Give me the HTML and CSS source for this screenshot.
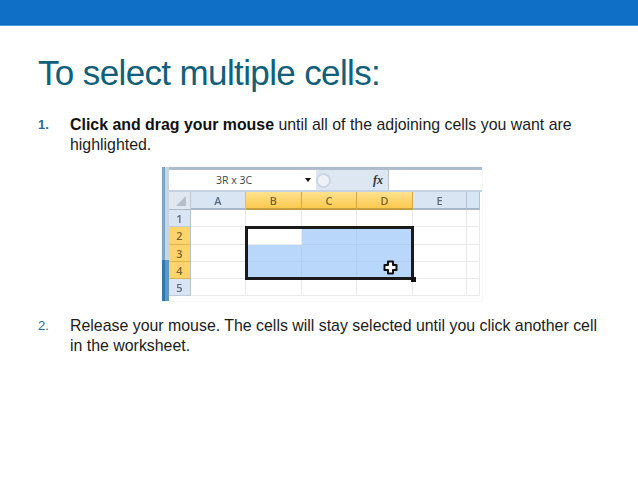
FILE: index.html
```html
<!DOCTYPE html>
<html lang="en">
<head>
<meta charset="utf-8">
<title>To select multiple cells</title>
<link rel="stylesheet" href="styles.css">
</head>
<body>
<header class="topbar"></header>
<main class="slide">
  <h1 class="title">To select multiple cells:</h1>
  <div class="item">
    <span class="num">1.</span>
    <p class="text"><b>Click and drag your mouse</b> until all of the adjoining cells you want are highlighted.</p>
  </div>
  <div class="shot-wrap">
    <div class="shot">
      <div class="strip"><div class="strip-dark"></div></div>
      <div class="sheet">
        <div class="formula">
          <div class="namebox"><span class="nametext">3R x 3C</span><span class="arrow"></span></div>
          <div class="fxbox"><span class="pill"></span><span class="fx">fx</span></div>
          <div class="input"></div>
        </div>
        <div class="grid">
          <div class="corner"><svg width="10" height="10" viewBox="0 0 10 10"><path d="M10 0V10H0Z" fill="#b4bfca"/></svg></div>
          <div class="ch">A</div><div class="ch on">B</div><div class="ch on">C</div><div class="ch on">D</div><div class="ch">E</div><div class="ch"></div>

          <div class="rh">1</div><div class="c"></div><div class="c"></div><div class="c"></div><div class="c"></div><div class="c"></div><div class="c"></div>
          <div class="rh on">2</div><div class="c"></div><div class="c"></div><div class="c s"></div><div class="c s"></div><div class="c"></div><div class="c"></div>
          <div class="rh on">3</div><div class="c"></div><div class="c s"></div><div class="c s"></div><div class="c s"></div><div class="c"></div><div class="c"></div>
          <div class="rh on">4</div><div class="c"></div><div class="c s"></div><div class="c s"></div><div class="c s"></div><div class="c"></div><div class="c"></div>
          <div class="rh">5</div><div class="c"></div><div class="c"></div><div class="c"></div><div class="c"></div><div class="c"></div><div class="c"></div>
          <div class="rest"></div>

          <div class="range"><span class="handle"></span>
            <svg class="cursor" width="15" height="15" viewBox="0 0 15 15"><path d="M5 1.5H10V5H13.5V10H10V13.5H5V10H1.5V5H5Z" fill="#fff" stroke="#111" stroke-width="2" stroke-linejoin="round"/></svg>
          </div>
        </div>
      </div>
    </div>
  </div>
  <div class="item item-second">
    <span class="num">2.</span>
    <p class="text">Release your mouse. The cells will stay selected until you click another cell in the worksheet.</p>
  </div>
</main>
</body>
</html>
```
FILE: styles.css
```css
* { box-sizing: border-box; }
html, body { margin: 0; padding: 0; }
body {
  width: 638px;
  height: 479px;
  overflow: hidden;
  background: #fff;
  font-family: "Liberation Sans", Arial, sans-serif;
  color: #1b1b1b;
}
.topbar {
  height: 26px;
  background: #0f6fc6;
  border-bottom: 1px solid #4d97db;
}
.slide { padding: 26px 0 0 38px; }
.title {
  margin: 0;
  font-size: 35px;
  line-height: 42px;
  font-weight: 400;
  letter-spacing: -0.63px;
  color: #10607a;
}
.item {
  display: flex;
  margin-top: 21px;
  font-size: 15.9px;
  line-height: 20px;
}
.num {
  width: 32px;
  flex: none;
  color: #2a6a96;
  font-size: 13px;
  font-weight: 700;
}
.item-second .num { font-weight: 400; }
.text { margin: 0; width: 535px; }
.text b { color: #111; }
.shot-wrap { margin: 12px 0 0 124px; height: 134px; }
.shot {
  width: 320px;
  height: 134px;
  display: flex;
  filter: blur(0.6px);
  box-shadow: 0 0 2px #e8e8e8;
}
.strip {
  width: 7px;
  display: flex;
  align-items: flex-end;
  background: linear-gradient(90deg, #7fa5c5 45%, #c8d6e3 45%);
}
.strip-dark { width: 100%; height: 41px; background: linear-gradient(90deg, #2f77ad 45%, #5f97c2 45%); }
.sheet { flex: 1; display: flex; flex-direction: column; min-width: 0; }
.formula {
  height: 25px;
  display: flex;
  background: #e3ebf4;
  border-top: 3px solid #aebccb;
  border-bottom: 2px solid #c6d2df;
}
.namebox {
  width: 147px;
  background: #fff;
  display: flex;
  align-items: center;
  padding-left: 47px;
  font-family: "Open Sans", sans-serif;
  font-size: 10.5px;
  color: #444;
}
.nametext { width: 89px; }
.arrow { width: 0; height: 0; border: 3px solid transparent; border-top: 4px solid #111; border-bottom: 0; }
.fxbox {
  width: 72px;
  display: flex;
  align-items: center;
  justify-content: space-between;
  padding-right: 5px;
  background: #dde7f2;
}
.pill {
  width: 15px; height: 15px;
  border: 2px solid #ccd6e1; border-radius: 50%; background: #eef2f7;
}
.fx { font-family: "Liberation Serif", serif; font-style: italic; font-weight: 700; font-size: 12px; color: #333; }
.input { flex: 1; background: #fff; border-left: 1px solid #b6c4d2; }
.grid {
  position: relative;
  display: grid;
  grid-template-columns: 22px 55px 56px 55px 56px 54px 13px;
  grid-template-rows: 18px 17px 18px 17px 17px 17px 1fr;
  flex: 1;
}
.corner {
  background: #e0e7f0;
  border-right: 1px solid #bcc8d6;
  border-bottom: 1px solid #a9b8c8;
  display: flex; align-items: flex-end; justify-content: flex-end;
  padding: 0 4px 3px 0;
}
.ch, .rh {
  display: flex; align-items: center; justify-content: center;
  font-family: "Open Sans", sans-serif;
  font-size: 11px;
  font-weight: 600;
  color: #5a6b7d;
  background: #d9e5f3;
}
.ch { border-right: 1px solid #b3c2d2; border-bottom: 2px solid #a9b8c8; }
.rh { border-right: 1px solid #b3c2d2; border-bottom: 1px solid #c0ccd9; }
.ch.on { background: linear-gradient(#fde28f, #fbc94f); border-right-color: #d2a84a; border-bottom-color: #c79e3f; color: #7a6330; }
.rh.on { background: #fdd36b; border-bottom-color: #e0b450; color: #7a6330; }
.c { background: #fff; border-right: 1px solid #e8eaec; border-bottom: 1px solid #e8eaec; }
.c.s { background: #b8d7fb; border-color: #b0cff2; }
.rest { grid-column: 1 / -1; background: #fff; }
.range {
  position: absolute;
  left: 76px; top: 34px;
  width: 169px; height: 54px;
  border: 3px solid #1a1a1a;
}
.handle {
  position: absolute;
  right: -5px; bottom: -5px;
  width: 5px; height: 5px;
  background: #111;
}
.cursor { position: absolute; left: 135px; top: 31px; }
.item-second { margin-top: 15px; }
```
